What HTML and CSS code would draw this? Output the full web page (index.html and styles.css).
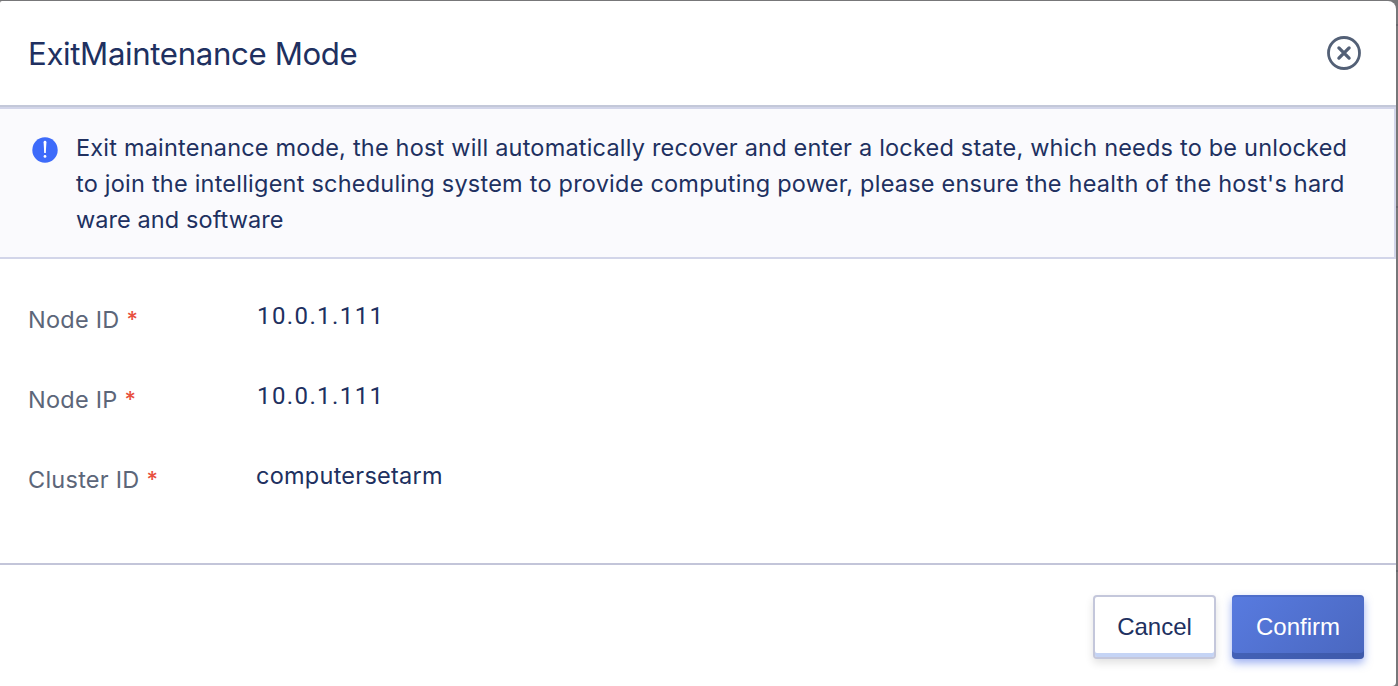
FILE: index.html
```html
<!DOCTYPE html>
<html lang="en">
<head>
<meta charset="utf-8">
<title>ExitMaintenance Mode</title>
<link rel="stylesheet" href="styles.css">
</head>
<body>
<div class="dialog">
  <header class="dialog-header">
    <h1 class="dialog-title">ExitMaintenance Mode</h1>
    <button class="close" aria-label="Close">
      <svg width="34" height="34" viewBox="0 0 34 34" fill="none" stroke="#536076">
        <circle cx="17" cy="17" r="15.5" stroke-width="2.8"/>
        <path d="M11.9 11.9 22.1 22.1M22.1 11.9 11.9 22.1" stroke-width="3.3" stroke-linecap="round"/>
      </svg>
    </button>
  </header>
  <div class="alert">
    <svg class="alert-icon" width="26" height="26" viewBox="0 0 26 26">
      <circle cx="13" cy="13" r="12.7" fill="#3d6bfa"/>
      <path d="M11.6 5.2a1.4 1.4 0 0 1 2.8 0L13.8 16h-1.6Z" fill="#fff"/>
      <circle cx="13" cy="19.4" r="1.4" fill="#fff"/>
    </svg>
    <p class="alert-text">
      <span class="line line-a">Exit maintenance mode, the host will automatically recover and enter a locked state, which needs to be unlocked</span>
      <span class="line line-b">to join the intelligent scheduling system to provide computing power, please ensure the health of the host's hard</span>
      <span class="line line-c">ware and software</span>
    </p>
  </div>
  <main class="form">
    <div class="row"><span class="label">Node ID <i class="star">*</i></span><span class="value number">10.0.1.111</span></div>
    <div class="row"><span class="label">Node IP <i class="star">*</i></span><span class="value number">10.0.1.111</span></div>
    <div class="row"><span class="label">Cluster ID <i class="star">*</i></span><span class="value">computersetarm</span></div>
  </main>
  <footer class="dialog-footer">
    <button class="btn cancel">Cancel</button>
    <button class="btn confirm">Confirm</button>
  </footer>
</div>
</body>
</html>
```
FILE: styles.css
```css
* { box-sizing: border-box; }
body {
  margin: 0;
  height: 686px;
  padding: 1px 2px 0 0;
  overflow: hidden;
  background: linear-gradient(#777779 24px, #66666c 24px 26px, #777779 26px 206px, #66666c 206px 208px, #777779 208px 570px, #66666c 570px 572px, #777779 572px);
  font-family: Inter, "Liberation Sans", sans-serif;
  color: #203060;
}
.dialog {
  display: flex;
  flex-direction: column;
  height: 685px;
  background: #fff;
  border-radius: 2px 8px 4px 0;
}
.dialog-header {
  display: flex;
  align-items: center;
  justify-content: space-between;
  height: 106px;
  padding: 0 35px 0 28px;
  border-bottom: 2px solid #c3c8d9;
}
.dialog-title {
  margin: 0;
  padding-top: 1px;
  font-size: 31.2px;
  font-weight: 400;
  line-height: 40px;
  letter-spacing: -0.36px;
  white-space: nowrap;
}
.close { padding: 0; border: 0; background: none; }
.close svg { display: block; }
.alert {
  display: flex;
  height: 152px;
  padding: 20px 0 0 32px;
  background: #fafafd;
  border: 2px solid #d2d5e9;
  border-left: 0;
}
.alert-icon { flex: none; margin-top: 8px; }
.alert-text {
  margin: 1px 0 0 18px;
  font-size: 23.5px;
  line-height: 36px;
}
.line { display: block; width: max-content; white-space: nowrap; letter-spacing: 0.2px; }
.line-b { letter-spacing: 0.22px; }
.line-c { letter-spacing: 0.08px; }
.form { height: 304px; padding: 37px 28px 0; }
.row {
  display: flex;
  height: 80px;
  font-size: 23.5px;
  line-height: 40px;
  letter-spacing: 0.25px;
}
.label { width: 228px; padding-top: 4px; color: #5c6679; white-space: nowrap; }
.star {
  display: inline-block;
  font-size: 22px;
  font-style: normal;
  font-weight: 500;
  line-height: 1;
  vertical-align: 1px;
  color: #e8503e;
}
.value { white-space: nowrap; }
.number { padding-left: 1px; font-family: Roboto, sans-serif; font-size: 24px; letter-spacing: 1.4px; }
.dialog-footer {
  display: flex;
  flex: 1;
  gap: 16px;
  justify-content: flex-end;
  padding: 30px 32px 0 0;
  border-top: 2px solid #c3c5d9;
}
.btn {
  height: 64px;
  padding: 0 0 1px;
  border-radius: 4px;
  font: 24px "Liberation Sans", Arial, sans-serif;
}
.cancel {
  width: 123px;
  color: #203060;
  background: #fff;
  border: 2px solid #c4c7db;
  box-shadow: inset 0 -4px #c5d4f5, 0 4px 8px rgba(0, 0, 0, .12);
}
.confirm {
  width: 132px;
  color: #fff;
  border: 0;
  background: linear-gradient(135deg, #587be0, #4a67bf);
  box-shadow: inset 0 2px rgba(50, 75, 150, .25), inset 0 -6px rgba(50, 75, 150, .5), 0 4px 8px rgba(61, 100, 230, .5);
}
```
